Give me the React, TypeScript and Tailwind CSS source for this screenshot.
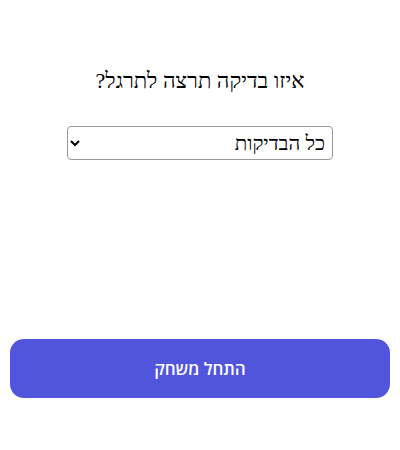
import React from "react";

export default function App() {
  return (
    <div dir="rtl" className="w-[400px] h-[450px] bg-white flex flex-col items-center">
      <h2 className="mt-[68px] text-[22px] leading-[26px] text-black font-['Liberation_Serif',serif]">
        איזו בדיקה תרצה לתרגל?
      </h2>
      <select
        className="mt-[32px] w-[266px] h-[34px] border border-[#9a9a9a] rounded-[4px] pr-[3px] pl-1 text-[20.5px] text-black bg-white font-['Liberation_Serif',serif]"
        defaultValue="all"
      >
        <option value="all">כל הבדיקות</option>
      </select>
      <div className="flex-1" />
      <button className="mb-[52px] w-[380px] h-[59px] rounded-[14px] bg-[#5155dc] text-white text-[17px] font-semibold font-['Open_Sans',sans-serif]">
        התחל משחק
      </button>
    </div>
  );
}
